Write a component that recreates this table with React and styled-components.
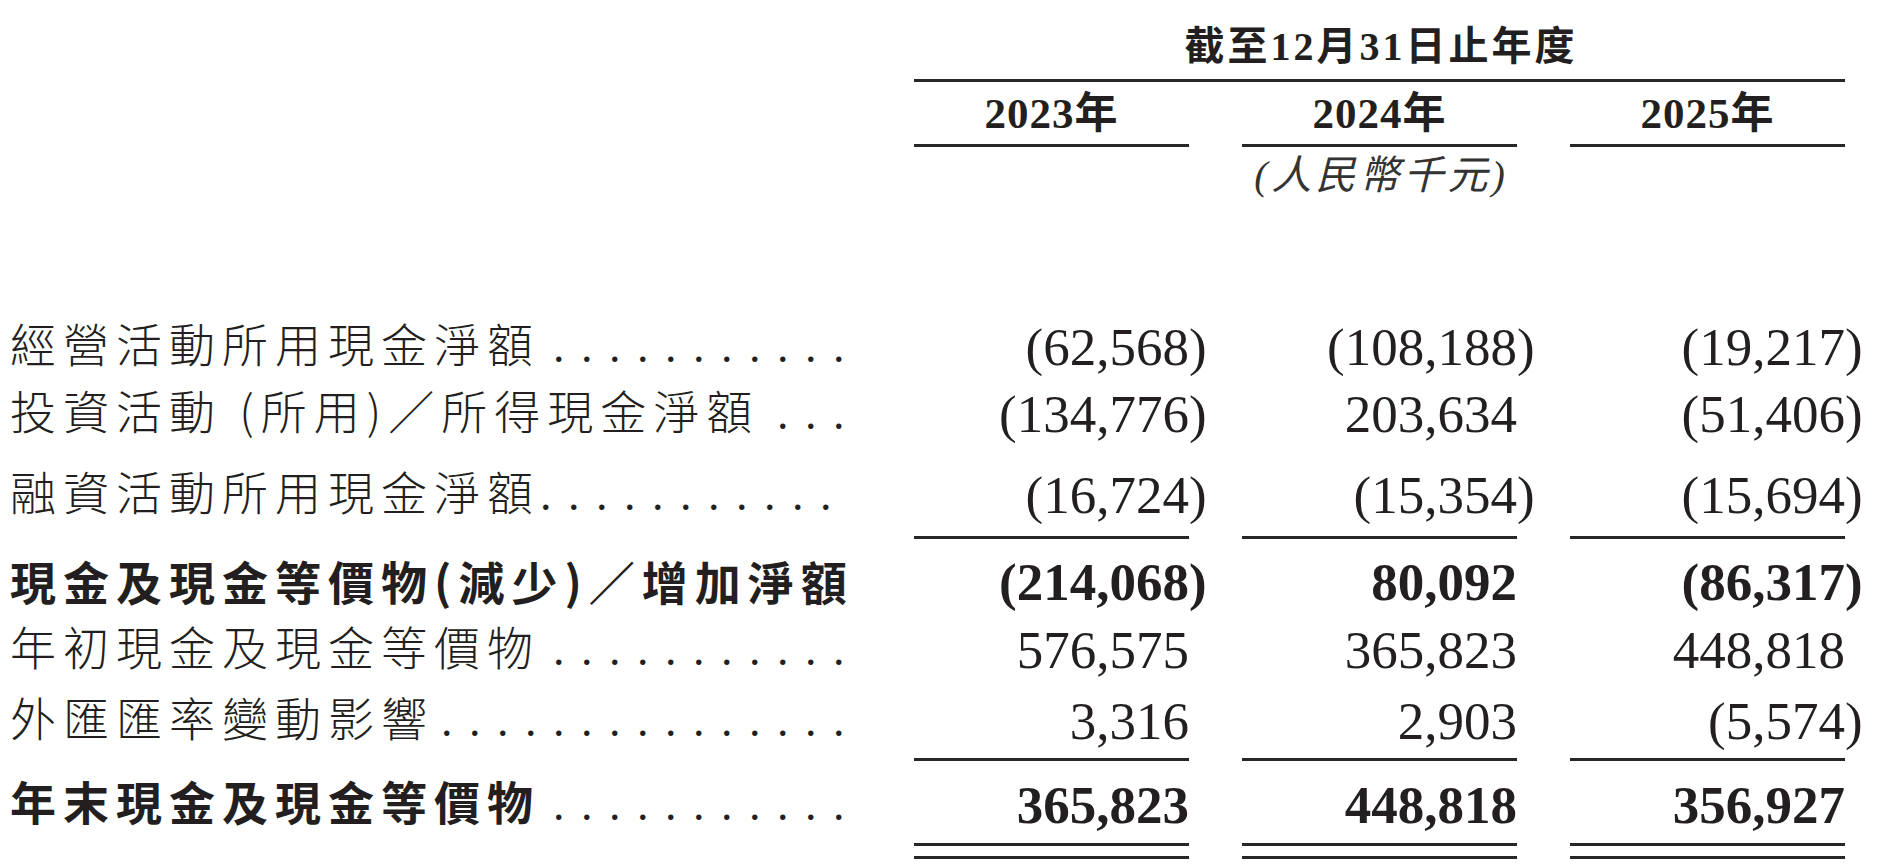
import styled, { createGlobalStyle } from "styled-components"

const GlobalStyle = createGlobalStyle`
  html, body {
    margin: 0;
    padding: 0;
    background: #fff;
  }
  body {
    color: #231f20;
    font-family: "Liberation Serif", "Noto Sans CJK TC", serif;
  }
`

// 項目欄 + 三個年度欄
const COLS = "851px 275px 275px 275px"

const rows = [
  { label: "經營活動所用現金淨額", dots: 11, values: [-62568, -108188, -19217], mt: 0 },
  { label: "投資活動 (所用)／所得現金淨額", dots: 3, values: [-134776, 203634, -51406], mt: 13 },
  { label: "融資活動所用現金淨額", dots: 11, dotsInset: 14, values: [-16724, -15354, -15694], mt: 27, rule: "single", ruleMt: 19 },
  { label: "現金及現金等價物(減少)／增加淨額", dots: 0, values: [-214068, 80092, -86317], mt: 14, bold: true },
  { label: "年初現金及現金等價物", dots: 11, values: [576575, 365823, 448818], mt: 11 },
  { label: "外匯匯率變動影響", dots: 15, values: [3316, 2903, -5574], mt: 17, rule: "single", ruleMt: 15 },
  { label: "年末現金及現金等價物", dots: 11, values: [365823, 448818, 356927], mt: 12, bold: true, rule: "double", ruleMt: 16 },
]

const years = ["2023年", "2024年", "2025年"]

const fmt = (n) => Math.abs(n).toLocaleString("en-US")

export default function App() {
  return (
    <Page>
      <GlobalStyle />
      <Grid $mt={23}>
        <Title>截至12月31日止年度</Title>
      </Grid>
      <Grid $mt={8}>
        <TopRule />
      </Grid>
      <Grid $mt={8}>
        <span />
        {years.map((y) => (
          <Year key={y}>{y}</Year>
        ))}
      </Grid>
      <RuleRow $mt={6} />
      <Grid $mt={7}>
        <Currency>(人民幣千元)</Currency>
      </Grid>

      <Body>
        {rows.map((r) => (
          <div key={r.label}>
            <Row $mt={r.mt}>
              <Label $bold={r.bold}>
                <span>{r.label}</span>
                {r.dots > 0 && <Dots $inset={r.dotsInset}>{".".repeat(r.dots)}</Dots>}
              </Label>
              {r.values.map((v, i) => (
                <Num key={i} $bold={r.bold}>
                  {v < 0 ? (
                    <>
                      ({fmt(v)}
                      <Close>)</Close>
                    </>
                  ) : (
                    fmt(v)
                  )}
                </Num>
              ))}
            </Row>
            {r.rule && <RuleRow $mt={r.ruleMt} $double={r.rule === "double"} />}
          </div>
        ))}
      </Body>
    </Page>
  )
}

const RuleRow = ({ $mt, $double }) => (
  <Grid $mt={$mt}>
    <span />
    <Rule $double={$double} />
    <Rule $double={$double} />
    <Rule $double={$double} />
  </Grid>
)

const Page = styled.div`
  width: 1890px;
  height: 864px;
  box-sizing: border-box;
  padding-left: 10px;
  overflow: hidden;
`
const Grid = styled.div`
  display: grid;
  grid-template-columns: ${COLS};
  column-gap: 53px;
  margin-top: ${(p) => p.$mt || 0}px;
`
const Title = styled.div`
  grid-column: 2 / 5;
  text-align: center;
  font-size: 40px;
  font-weight: 700;
  line-height: 48px;
  letter-spacing: 3px;
  padding-left: 3px;
`
const TopRule = styled.div`
  grid-column: 2 / 5;
  height: 3px;
  background: #262626;
`
const Year = styled.div`
  text-align: center;
  font-size: 43px;
  font-weight: 700;
  line-height: 48px;
  letter-spacing: 1px;
`
const Rule = styled.div`
  box-sizing: border-box;
  height: ${(p) => (p.$double ? 16 : 3)}px;
  border-top: 3px solid #262626;
  border-bottom: ${(p) => (p.$double ? "3px solid #262626" : "none")};
`
const Currency = styled.div`
  grid-column: 3;
  text-align: center;
  font-size: 40px;
  font-style: italic;
  line-height: 44px;
  letter-spacing: 4px;
  padding-left: 4px;
  color: #333;
`
const Body = styled.div`
  margin-top: 117px;
`
const Row = styled(Grid)`
  height: 54px;
  align-items: center;
`
const Label = styled.div`
  display: flex;
  align-items: baseline;
  padding-bottom: 4px;
  font-family: "Noto Sans CJK TC", "Noto Sans CJK SC", sans-serif;
  font-size: 46px;
  font-weight: ${(p) => (p.$bold ? 700 : 300)};
  line-height: 54px;
  letter-spacing: 7px;
  white-space: nowrap;
`
const Dots = styled.span`
  margin-left: auto;
  margin-right: ${(p) => p.$inset || 0}px;
  flex-shrink: 0;
  font-family: "Liberation Serif", serif;
  font-weight: 400;
  font-size: 46px;
  letter-spacing: 16.5px;
`
const Num = styled.div`
  text-align: right;
  font-family: "Liberation Serif", serif;
  font-size: 53px;
  font-weight: ${(p) => (p.$bold ? 700 : 400)};
  line-height: 54px;
  white-space: nowrap;
`
const Close = styled.span`
  margin-right: -0.333em;
`
